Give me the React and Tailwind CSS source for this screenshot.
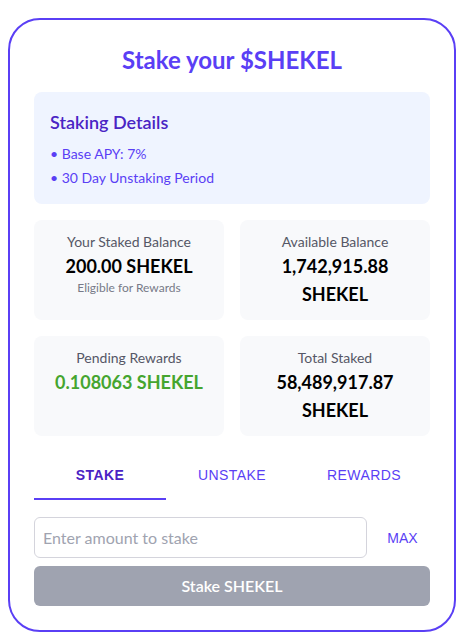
import { useState } from 'react';

const sans = { fontFamily: 'Lato, "Open Sans", sans-serif' };
const arial = { fontFamily: '"Liberation Sans", Arial, sans-serif' };

function StatCard({ label, value, note, green }) {
  return (
    <div className="bg-[#f8f9fb] rounded-lg p-3 text-center">
      <p className="text-sm text-[#555766]">{label}</p>
      <p className={`text-lg font-bold ${green ? 'text-[#45a52f]' : 'text-black'}`}>{value}</p>
      {note && <p className="text-xs text-[#777a88]">{note}</p>}
    </div>
  );
}

export default function App() {
  const [tab, setTab] = useState('stake');
  const [amount, setAmount] = useState('');

  const tabs = [
    { id: 'stake', label: 'Stake' },
    { id: 'unstake', label: 'Unstake' },
    { id: 'rewards', label: 'Rewards' },
  ];

  return (
    <div className="bg-white min-h-[639px]" style={sans}>
      <div className="max-w-md mx-auto mt-[18px] border-2 border-[#5a3ff5] rounded-[32px] bg-white p-6">
        <h1 className="text-2xl font-bold text-center text-[#5a3ff5] mb-4">Stake your $SHEKEL</h1>

        <div className="bg-[#eff4ff] rounded-lg p-4 mb-4">
          <h2 className="text-lg font-semibold text-[#4a24c4] mb-2">Staking Details</h2>
          <ul className="text-sm text-[#5a3ff5] space-y-1">
            <li>• Base APY: 7%</li>
            <li>• 30 Day Unstaking Period</li>
          </ul>
        </div>

        <div className="grid grid-cols-2 gap-4">
          <StatCard label="Your Staked Balance" value="200.00 SHEKEL" note="Eligible for Rewards" />
          <StatCard label="Available Balance" value="1,742,915.88 SHEKEL" />
          <StatCard label="Pending Rewards" value="0.108063 SHEKEL" green />
          <StatCard label="Total Staked" value="58,489,917.87 SHEKEL" />
        </div>

        <div className="grid grid-cols-3 mt-4" style={arial}>
          {tabs.map((t) => (
            <button
              key={t.id}
              onClick={() => setTab(t.id)}
              className={`h-12 uppercase text-sm tracking-[0.4px] border-b-2 ${
                tab === t.id
                  ? 'font-bold text-[#4a22c4] border-[#5a3ff5]'
                  : 'text-[#5a3ff5] border-transparent'
              }`}
            >
              {t.label}
            </button>
          ))}
        </div>

        <div className="flex items-center gap-2 mt-[17px]">
          <input
            value={amount}
            onChange={(e) => setAmount(e.target.value)}
            placeholder="Enter amount to stake"
            className="flex-1 min-w-0 h-[41px] border border-[#d4d4dc] rounded-md px-2 text-base placeholder:text-[#a0a3b0] outline-none"
          />
          <button className="w-[55px] h-[41px] text-sm text-[#5a3ff5]" style={arial}>MAX</button>
        </div>

        <button className="w-full h-10 mt-2 rounded-md bg-[#9fa3b0] text-white font-semibold text-base">
          Stake SHEKEL
        </button>
      </div>
    </div>
  );
}
